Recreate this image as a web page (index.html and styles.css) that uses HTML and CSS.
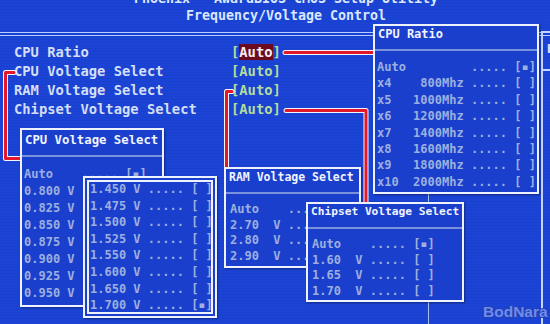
FILE: index.html
```html
<!DOCTYPE html>
<html lang="en">
<head>
    <meta charset="UTF-8">
    <title>Frequency/Voltage Control</title>
    <link rel="stylesheet" href="styles.css">
</head>
<body>

    <div class="screen">
        <div class="header">
            <div>Phoenix - AwardBIOS CMOS Setup Utility</div>
            <div>Frequency/Voltage Control</div>
        </div>
        <div class="rule"></div>

        <div class="menu">
            <span>CPU Ratio</span><span class="value">[<b class="selected">Auto</b>]</span>
            <span>CPU Voltage Select</span><span class="value">[Auto]</span>
            <span>RAM Voltage Select</span><span class="value">[Auto]</span>
            <span>Chipset Voltage Select</span><span class="value">[Auto]</span>
        </div>

        <div class="help"><div class="help-title">Help</div></div>
        <div class="guide"></div>

        <svg class="links" width="550" height="324" viewBox="0 0 550 324">
            <g fill="none" stroke="#f4f6ff" stroke-width="5" stroke-linecap="round" stroke-linejoin="round">
                <path d="M285 52.5 H376" />
                <path d="M14 72.5 H5.5 V158.5 H28" />
                <path d="M232 91.5 H226.5 V172" />
                <path d="M286 110.5 H366 V205" />
            </g>
            <g fill="none" stroke="#e3192b" stroke-width="3" stroke-linecap="round" stroke-linejoin="round">
                <path d="M285 52.5 H376" />
                <path d="M14 72.5 H5.5 V158.5 H28" />
                <path d="M232 91.5 H226.5 V172" />
                <path d="M286 110.5 H366 V205" />
            </g>
        </svg>

        <div class="win win-ratio">
            <div class="win-title">CPU Ratio</div>
            <div class="win-rule"></div>
            <div class="win-rows">Auto         ..... [▪]
x4    800Mhz ..... [ ]
x5   1000Mhz ..... [ ]
x6   1200Mhz ..... [ ]
x7   1400Mhz ..... [ ]
x8   1600Mhz ..... [ ]
x9   1800Mhz ..... [ ]
x10  2000Mhz ..... [ ]</div>
        </div>

        <div class="win win-cpu">
            <div class="win-title">CPU Voltage Select</div>
            <div class="win-rule"></div>
            <div class="win-rows">Auto    ..... [▪]
0.800 V ..... [ ]
0.825 V ..... [ ]
0.850 V ..... [ ]
0.875 V ..... [ ]
0.900 V ..... [ ]
0.925 V ..... [ ]
0.950 V ..... [ ]</div>
        </div>

        <div class="win win-cpu-more">
            <div class="win-rows">1.450 V ..... [ ]
1.475 V ..... [ ]
1.500 V ..... [ ]
1.525 V ..... [ ]
1.550 V ..... [ ]
1.600 V ..... [ ]
1.650 V ..... [ ]
1.700 V ..... [▪]</div>
        </div>

        <div class="win win-ram">
            <div class="win-title">RAM Voltage Select</div>
            <div class="win-rule"></div>
            <div class="win-rows">Auto    ..... [▪]
2.70  V ..... [ ]
2.80  V ..... [ ]
2.90  V ..... [ ]</div>
        </div>

        <div class="win win-chipset">
            <div class="win-title">Chipset Voltage Select</div>
            <div class="win-rule"></div>
            <div class="win-rows">Auto    ..... [▪]
1.60  V ..... [ ]
1.65  V ..... [ ]
1.70  V ..... [ ]</div>
        </div>

        <span class="mark">BodNara</span>
    </div>

</body>
</html>
```

FILE: styles.css
```css
body {
    margin: 0;
    background-color: #1b42d2;
}
.screen {
    position: relative;
    width: 550px;
    height: 324px;
    overflow: hidden;
    background-color: #1b44d6;
    background-image: repeating-linear-gradient(to bottom, rgba(0, 0, 0, 0.05) 0, rgba(0, 0, 0, 0.05) 1px, transparent 1px, transparent 3px);
    font-family: 'DejaVu Sans Mono', 'Liberation Mono', monospace;
    font-weight: bold;
}
.header {
    margin-top: -10px;
    padding-left: 22px;
    text-align: center;
    font-size: 13.3px;
    line-height: 17px;
    color: #dae6ff;
}
.rule {
    margin-top: 8px;
    height: 2px;
    border-top: 1px solid #b4ccff;
    border-bottom: 1px solid #b4ccff;
}
.menu {
    display: grid;
    grid-template-columns: 217px auto;
    margin-top: 7px;
    padding-left: 14px;
    font-size: 13.8px;
    line-height: 19px;
    color: #d4def6;
}
.value {
    color: #b4dc9c;
}
.selected {
    background-color: #6e0a1e;
    color: #f4eef4;
}
.help {
    position: absolute;
    left: 541px;
    top: 31px;
    width: 40px;
    height: 300px;
    border: 2px solid #c4d4ff;
    box-sizing: border-box;
}
.help-title {
    padding: 7px 4px 0;
    height: 38px;
    box-sizing: border-box;
    border-bottom: 2px solid #c4d4ff;
    font-size: 13px;
    line-height: 18px;
    color: #dae6ff;
    white-space: nowrap;
}
.guide {
    position: absolute;
    left: 428px;
    top: 190px;
    width: 1px;
    height: 140px;
    background-color: #a8c0f4;
}
.links {
    position: absolute;
    left: 0;
    top: 0;
}
.win {
    position: absolute;
    box-sizing: border-box;
    overflow: hidden;
    background-color: #1a3fcc;
    border: 2px solid #eef2ff;
    box-shadow: 1px 1px 2px rgba(0, 0, 20, 0.4);
    font-size: 12px;
    color: #9cb0e0;
}
.win-title {
    padding: 0 3px;
    line-height: 16px;
    color: #f0f4ff;
    white-space: pre;
}
.win-rule {
    margin-top: 7px;
    height: 2px;
    background-color: #7a92dc;
}
.win-rows {
    padding: 8px 2px 0;
    line-height: 16.4px;
    white-space: pre;
}
.win-ratio {
    left: 373px;
    top: 24px;
    width: 166px;
    height: 170px;
}
.win-cpu {
    left: 20px;
    top: 128px;
    width: 144px;
    height: 179px;
}
.win-cpu .win-title {
    padding-top: 2px;
    font-size: 12.3px;
}
.win-cpu .win-rows {
    padding-top: 9px;
    line-height: 17px;
}
.win-cpu-more {
    left: 83px;
    top: 176px;
    width: 134px;
    height: 142px;
    box-shadow: inset 0 0 0 2px #1a3fcc, inset 0 0 0 4px #eef2ff, 1px 1px 2px rgba(0, 0, 20, 0.4);
}
.win-cpu-more .win-rows {
    padding: 3px 5px 0;
    line-height: 16.6px;
}
.win-ram {
    left: 224px;
    top: 167px;
    width: 137px;
    height: 101px;
}
.win-ram .win-title {
    font-size: 11.5px;
}
.win-ram .win-rows,
.win-chipset .win-rows {
    padding-left: 4px;
    line-height: 15.7px;
}
.win-chipset {
    left: 306px;
    top: 202px;
    width: 158px;
    height: 100px;
}
.win-chipset .win-title {
    padding-left: 3px;
    font-size: 11.2px;
}
.mark {
    position: absolute;
    left: 483px;
    top: 303px;
    font-family: 'Liberation Sans', sans-serif;
    font-size: 15.5px;
    font-weight: bold;
    line-height: 18px;
    color: #6f8cec;
    text-shadow: 1px 0 0 #2540b0, -1px 0 0 #2540b0, 0 1px 0 #2540b0, 0 -1px 0 #2540b0;
}
```
